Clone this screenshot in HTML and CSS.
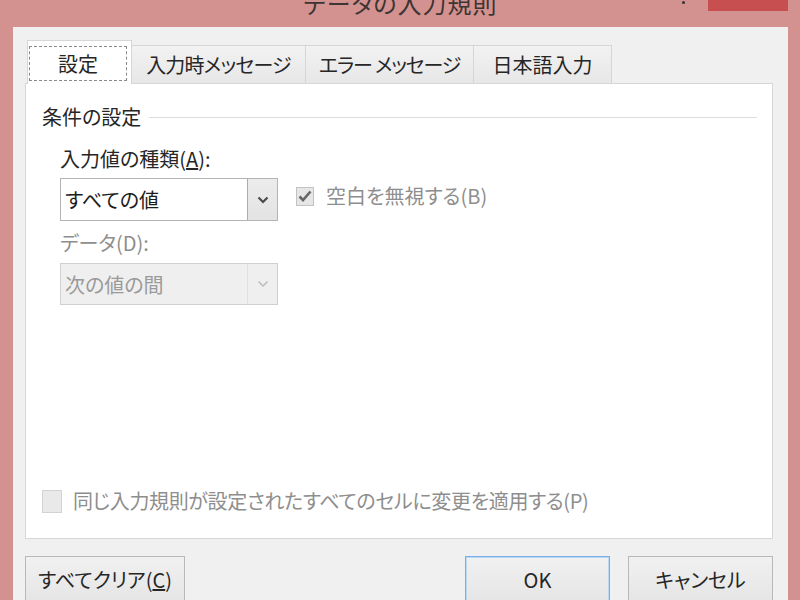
FILE: index.html
```html
<!DOCTYPE html>
<html lang="ja">
<head>
<meta charset="utf-8">
<title>データの入力規則</title>
<link rel="stylesheet" href="styles.css">
</head>
<body>
<div class="window">
  <div class="titlebar">
    <div class="title">データの入力規則</div>
    <span class="help-dot"></span>
    <span class="close"></span>
  </div>
  <div class="dialog">
    <div class="tabs">
      <div class="tab active"><span class="focus">設定</span></div>
      <div class="tab t2">入力時メッセージ</div>
      <div class="tab t3">エラー メッセージ</div>
      <div class="tab t4">日本語入力</div>
    </div>
    <div class="panel">
      <div class="group-head"><span>条件の設定</span><span class="rule"></span></div>
      <div class="group-body">
        <div class="label">入力値の種類(<u>A</u>):</div>
        <div class="combo-row">
          <div class="combo">
            <span class="combo-text">すべての値</span>
            <span class="combo-btn">
              <svg width="12" height="8" viewBox="0 0 12 8"><polyline points="1.5,1.5 6,6 10.5,1.5" fill="none" stroke="#4b4b4b" stroke-width="2.2"/></svg>
            </span>
          </div>
          <div class="check-item">
            <span class="checkbox checked">
              <svg width="14" height="12" viewBox="0 0 14 12"><polyline points="1.5,6.5 5,10 12.5,1.5" fill="none" stroke="#666" stroke-width="2.6"/></svg>
            </span>
            <span class="check-text disabled">空白を無視する(B)</span>
          </div>
        </div>
        <div class="label disabled data-label">データ(D):</div>
        <div class="combo combo-disabled">
          <span class="combo-text">次の値の間</span>
          <span class="combo-btn">
            <svg width="12" height="8" viewBox="0 0 12 8"><polyline points="1.5,1.5 6,6 10.5,1.5" fill="none" stroke="#b8b8b8" stroke-width="1.4"/></svg>
          </span>
        </div>
      </div>
      <div class="apply-row">
        <span class="checkbox big"></span>
        <span class="check-text disabled apply-text">同じ入力規則が設定されたすべてのセルに変更を適用する(P)</span>
      </div>
    </div>
    <div class="buttons">
      <button class="btn clear">すべてクリア(<u>C</u>)</button>
      <button class="btn ok">OK</button>
      <button class="btn cancel">キャンセル</button>
    </div>
  </div>
</div>
</body>
</html>
```
FILE: styles.css
```css
html, body {
  margin: 0;
  padding: 0;
}
body {
  width: 800px;
  height: 600px;
  overflow: hidden;
  background: #d3928f;
  font-family: "Noto Sans CJK JP", "Noto Sans", sans-serif;
  font-feature-settings: "palt";
  color: #262626;
}
.window {
  display: flex;
  flex-direction: column;
  height: 600px;
  padding: 0 12px 0 13px;
  box-sizing: border-box;
}
.titlebar {
  height: 27px;
  flex: none;
  position: relative;
}
.title {
  text-align: center;
  font-size: 24px;
  line-height: 24px;
  margin-top: -9px;
  color: #3d3434;
  letter-spacing: 1px;
}
.help-dot {
  position: absolute;
  left: 669px;
  top: 1px;
  width: 3px;
  height: 3px;
  border-radius: 50%;
  background: #333;
}
.close {
  position: absolute;
  right: 0;
  top: 0;
  width: 80px;
  height: 11px;
  background: #c84f50;
}
.dialog {
  flex: 1;
  background: #f0f0f0;
  padding: 13px 15px 0 12px;
  display: flex;
  flex-direction: column;
}
.tabs {
  display: flex;
  align-items: flex-end;
  height: 43px;
  padding-left: 2px;
  flex: none;
}
.tab {
  box-sizing: border-box;
  height: 38px;
  border: 1px solid #d6d6d6;
  border-bottom: none;
  background: linear-gradient(#f2f2f2, #e7e7e7);
  display: flex;
  align-items: center;
  justify-content: center;
  font-size: 20px;
  margin-left: -1px;
}
.tab.active {
  margin-left: 0;
  width: 105px;
  height: 44px;
  margin-bottom: -1px;
  background: #fff;
  position: relative;
  z-index: 1;
  padding: 5px 4px 3px 1px;
  align-items: stretch;
}
.focus {
  flex: 1;
  border: 1px dashed #8a8a8a;
  display: flex;
  align-items: center;
  justify-content: center;
}
.t2 { width: 175px; letter-spacing: -0.8px; }
.t3 { width: 169px; letter-spacing: -1.2px; white-space: pre; }
.t4 { width: 139px; }
.panel {
  box-sizing: border-box;
  height: 456px;
  flex: none;
  background: #fff;
  border: 1px solid #d6d6d6;
  padding: 21px 15px 25px 16px;
  display: flex;
  flex-direction: column;
}
.group-head {
  display: flex;
  align-items: center;
  font-size: 20px;
  line-height: 24px;
}
.rule {
  flex: 1;
  height: 1px;
  background: #dcdcdc;
  margin-left: 8px;
  margin-top: 1px;
}
.group-body {
  margin-left: 18px;
  margin-top: 18px;
}
.label {
  font-size: 20px;
  line-height: 24px;
}
.disabled {
  color: #8e8e8e;
}
.combo-row {
  display: flex;
  align-items: flex-start;
  margin-top: 7px;
}
.combo {
  box-sizing: border-box;
  width: 218px;
  height: 43px;
  border: 1px solid #b4b4b4;
  background: #fff;
  display: flex;
  align-items: stretch;
}
.combo-text {
  flex: 1;
  padding-left: 4px;
  font-size: 20px;
  display: flex;
  align-items: center;
  color: #1c1c1c;
}
.combo-btn {
  width: 29px;
  border-left: 1px solid #acacac;
  background: linear-gradient(#ececec, #e3e3e3);
  display: flex;
  align-items: center;
  justify-content: center;
}
.combo-disabled {
  height: 42px;
  border-color: #d0d0d0;
  background: #efefef;
}
.combo-disabled .combo-text {
  color: #9a9a9a;
}
.combo-disabled .combo-btn {
  border-left: 1px solid #e0e0e0;
  background: #efefef;
}
.check-item {
  display: flex;
  align-items: center;
  margin-left: 18px;
  margin-top: 6px;
}
.checkbox {
  box-sizing: border-box;
  width: 18px;
  height: 19px;
  border: 1px solid #c2c2c2;
  background: #e6e6e6;
  display: flex;
  align-items: center;
  justify-content: center;
}
.check-text {
  margin-left: 12px;
  font-size: 20px;
  line-height: 24px;
}
.data-label {
  margin-top: 10px;
}
.combo-disabled {
  margin-top: 8px;
}
.apply-row {
  margin-top: auto;
  display: flex;
  align-items: center;
}
.checkbox.big {
  width: 20px;
  height: 23px;
  border-color: #d2d2d2;
  background: #e9e9e9;
}
.apply-row .check-text {
  margin-left: 11px;
}
.apply-text {
  letter-spacing: -0.35px;
}
.buttons {
  display: flex;
  margin-top: 17px;
  flex: none;
}
.btn {
  box-sizing: border-box;
  height: 50px;
  border: 1px solid #b8b8b8;
  background: linear-gradient(#f1f1f1, #e4e4e4);
  font-family: "Noto Sans CJK JP", "Noto Sans", sans-serif;
  font-feature-settings: "palt";
  font-size: 20px;
  color: #262626;
  padding: 0 0 4px;
  border-radius: 0;
}
.clear { width: 160px; }
.ok {
  width: 145px;
  margin-left: auto;
  border-color: #78b0e6;
  box-shadow: inset 0 0 0 1px #b9d8f5;
}
.cancel {
  width: 145px;
  margin-left: 18px;
}
```
